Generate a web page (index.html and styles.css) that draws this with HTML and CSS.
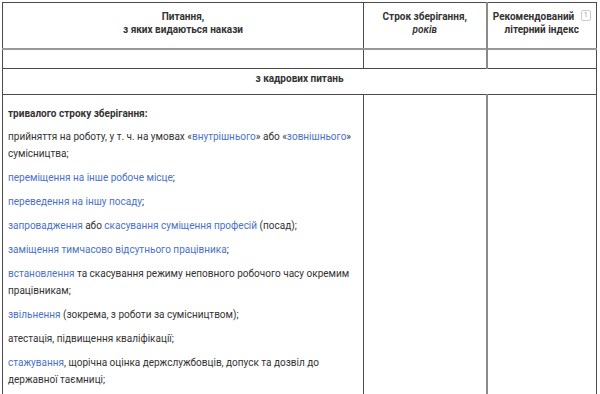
FILE: index.html
```html
<!DOCTYPE html>
<html lang="uk">
<head>
<meta charset="utf-8">
<link rel="stylesheet" href="styles.css">
</head>
<body>
<table class="nom">
  <colgroup>
    <col class="c1"><col class="c2"><col class="c3">
  </colgroup>
  <thead>
    <tr class="head">
      <th>Питання,<br>з яких видаються накази</th>
      <th>Строк зберігання,<br><em>років</em></th>
      <th class="idx"><span class="nw">Рекомендований <span class="badge">1</span></span><br>літерний індекс</th>
    </tr>
    <tr class="empty"><td></td><td></td><td class="idx"></td></tr>
  </thead>
  <tbody>
    <tr class="section"><td colspan="3">з кадрових питань</td></tr>
    <tr class="content">
      <td>
        <p class="lead">тривалого строку зберігання:</p>
        <p>прийняття на роботу, у т. ч. на умовах «<a href="#">внутрішнього</a>» або «<a href="#">зовнішнього</a>» сумісництва;</p>
        <p><a href="#">переміщення на інше робоче місце</a>;</p>
        <p><a href="#">переведення на іншу посаду</a>;</p>
        <p><a href="#">запровадження</a> або <a href="#">скасування суміщення професій</a> (посад);</p>
        <p><a href="#">заміщення тимчасово відсутнього працівника</a>;</p>
        <p><a href="#">встановлення</a> та скасування режиму неповного робочого часу окремим працівникам;</p>
        <p><a href="#">звільнення</a> (зокрема, з роботи за сумісництвом);</p>
        <p>атестація, підвищення кваліфікації;</p>
        <p><a href="#">стажування</a>, щорічна оцінка держслужбовців, допуск та дозвіл до державної таємниці;</p>
      </td>
      <td></td>
      <td class="idx"></td>
    </tr>
  </tbody>
</table>
</body>
</html>
```
FILE: styles.css
```css
html, body {
  margin: 0;
  padding: 0;
  background: #fff;
}
body {
  padding: 2px 0 0 2px;
  font-family: Roboto, "Noto Sans", sans-serif;
  font-size: 10px;
  color: #333;
}
.nom {
  border-collapse: collapse;
  width: 594px;
  table-layout: fixed;
  border: 1px solid #3a3a3a;
}
.c1 { width: 361px; }
.c2 { width: 123px; }
.c3 { width: 110px; }
.nom th, .nom td {
  border: 1px solid #4a4a4a;
  vertical-align: top;
  padding: 0;
}
.nom .idx { border-left: 2px solid #8a8a8a; }
.head th {
  height: 46px;
  padding: 7px 2px 0;
  font-weight: 700;
  line-height: 13px;
  text-align: center;
  box-sizing: border-box;
}
.head th em { font-weight: 600; }
.nw { white-space: nowrap; }
.badge {
  display: inline-block;
  min-width: 8px;
  height: 9px;
  margin-left: 4px;
  border: 1px solid #ccc;
  border-radius: 2px;
  color: #999;
  font-size: 7px;
  font-weight: 400;
  line-height: 9px;
  text-align: center;
  vertical-align: 3px;
}
.empty td {
  height: 18px;
  border-top: 2px solid #999;
}
.section td {
  height: 26px;
  text-align: center;
  font-weight: 700;
  padding-top: 4px;
  box-sizing: border-box;
}
.content td {
  padding: 10px 5px 0;
  line-height: 17px;
}
.content p {
  margin: 0 0 7px;
}
.content p.lead {
  font-weight: 700;
  margin-bottom: 6px;
}
a {
  color: #4a72c8;
  text-decoration: none;
}
```
